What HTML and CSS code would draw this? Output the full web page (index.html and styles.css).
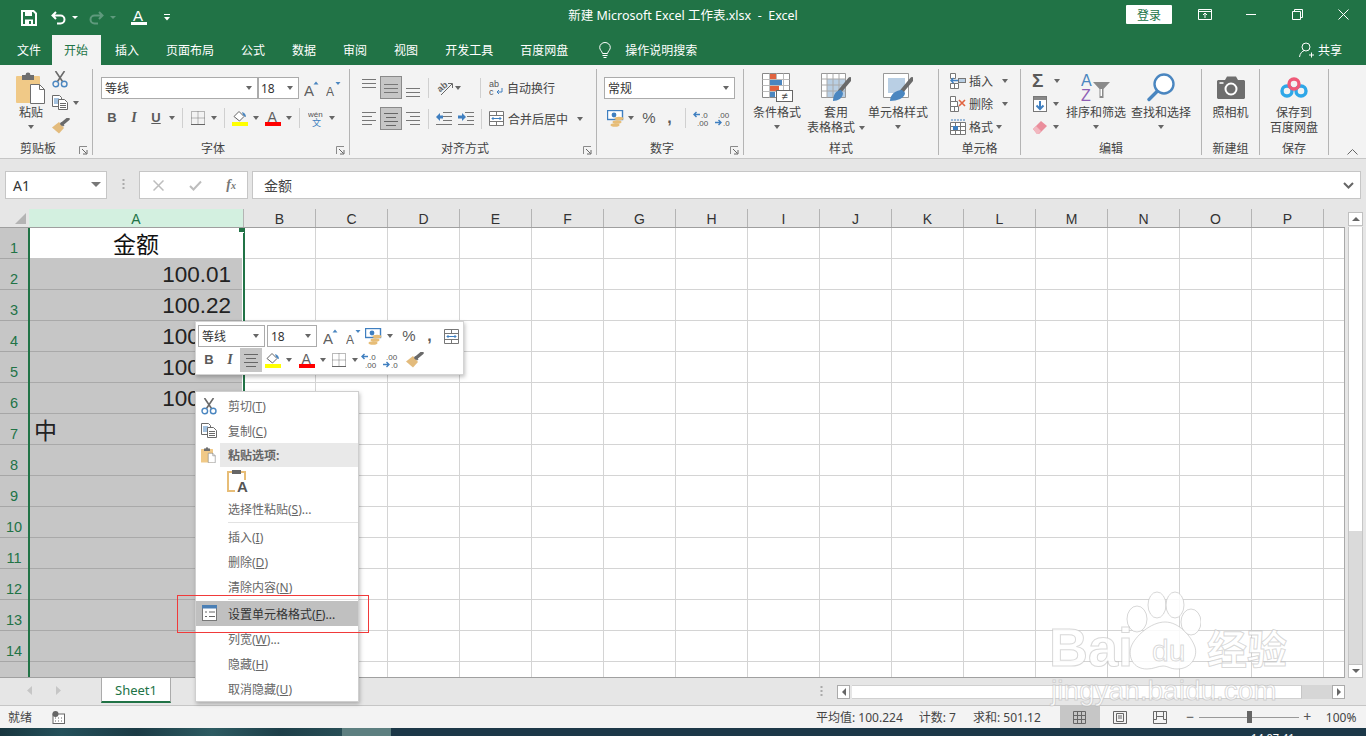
FILE: index.html
```html
<!DOCTYPE html>
<html lang="zh-CN">
<head>
<meta charset="utf-8">
<title>新建 Microsoft Excel 工作表.xlsx - Excel</title>
<link rel="stylesheet" href="styles.css">
</head>
<body>
<svg class="defs" width="0" height="0">
  <defs>
    <symbol id="i-paste" viewBox="0 0 30 32"><rect x="0" y="4" width="24" height="27" rx="1" fill="#f0c987"/><rect x="6" y="3" width="12" height="5" fill="#6e6e6e"/><circle cx="12" cy="3" r="2.4" fill="#6e6e6e"/><path d="M14.5 12.5h9l5 5v14h-14z" fill="#fff" stroke="#6e6e6e"/><path d="M23.5 12.5v5h5" fill="none" stroke="#6e6e6e"/></symbol>
    <symbol id="i-cut" viewBox="0 0 16 17"><path d="M3.5 0l7 10.5M12.500 0l-7 10.500" stroke="#6a6a6a" stroke-width="1.600" fill="none"/><circle cx="3.800" cy="13" r="2.800" fill="none" stroke="#4a86c0" stroke-width="1.400"/><circle cx="12.200" cy="13" r="2.800" fill="none" stroke="#4a86c0" stroke-width="1.400"/></symbol>
    <symbol id="i-copy" viewBox="0 0 16 15"><path d="M.5.500h7l2 2v9h-9z" fill="#fff" stroke="#6a6a6a"/><path d="M2 4h5M2 6h5M2 8h5" stroke="#4a86c0"/><path d="M6.500 4.500h6l3 3v7h-9z" fill="#fff" stroke="#6a6a6a"/><path d="M8 8.500h6M8 10.500h6M8 12.500h6" stroke="#6a6a6a"/></symbol>
    <symbol id="i-brush" viewBox="0 0 18 16"><path d="M0 9.500l7-5.500 5 6-5 5.500z" fill="#e3bb7c"/><path d="M8 5l3 3.500 1.500-1-2.500-3.500z" fill="#777"/><path d="M10 6l6-5" stroke="#6a6a6a" stroke-width="3.400" stroke-linecap="round"/></symbol>
    <symbol id="i-aup" viewBox="0 0 15 15"><text x="0" y="14.500" font-family="Liberation Sans" font-size="15" fill="#5f5f5f">A</text><path d="M9.500 3.500l2.500-3 2.500 3z" fill="#4a86c0"/></symbol>
    <symbol id="i-adown" viewBox="0 0 15 15"><text x="0" y="14.500" font-family="Liberation Sans" font-size="12" fill="#5f5f5f">A</text><path d="M9.500 1h5l-2.500 3z" fill="#4a86c0"/></symbol>
    <symbol id="i-border" viewBox="0 0 14 14"><path d="M.5.500h13v13h-13zM7 .5v13M.5 7h13" fill="none" stroke="#777" stroke-dasharray="1 1"/><path d="M0 13.500h14" stroke="#666"/></symbol>
    <symbol id="i-fill" viewBox="0 0 16 16"><path d="M2 6.500l5-5 5 5-4.500 4.500z" fill="#fff" stroke="#666"/><path d="M10 2c2.500.5 4 2.500 4 5-1 0-1.500-1-3-2z" fill="#4a86c0"/><rect y="12" width="16" height="4" fill="#ffff00"/></symbol>
    <symbol id="i-color" viewBox="0 0 16 16"><text x="2.500" y="11.500" font-family="Liberation Sans" font-size="14" fill="#5f5f5f">A</text><rect y="12" width="16" height="4" fill="#ff0000"/></symbol>
    <symbol id="i-wen" viewBox="0 0 17 17"><text x="0" y="7" font-family="Liberation Sans" font-size="8" fill="#555">wén</text><text x="4" y="16" font-family="Noto Sans CJK SC" font-size="9" fill="#3f7fc0">文</text></symbol>
    <symbol id="i-atop" viewBox="0 0 14 23"><path d="M0 2.500h14M0 6.500h14M0 10.500h14" stroke="#777" transform="translate(0 1)"/></symbol>
    <symbol id="i-amid" viewBox="0 0 14 23"><path d="M0 7.500h14M0 11.500h14M0 15.500h14" stroke="#777"/></symbol>
    <symbol id="i-abot" viewBox="0 0 14 23"><path d="M0 12.500h14M0 16.500h14M0 20.500h14" stroke="#777"/></symbol>
    <symbol id="i-aleft" viewBox="0 0 14 23"><path d="M0 5.500h14M0 9.500h10M0 13.500h14M0 17.500h10" stroke="#777"/></symbol>
    <symbol id="i-acen" viewBox="0 0 14 23"><path d="M0 5.500h14M2 9.500h10M0 13.500h14M2 17.500h10" stroke="#666"/></symbol>
    <symbol id="i-aright" viewBox="0 0 14 23"><path d="M0 5.500h14M4 9.500h10M0 13.500h14M4 17.500h10" stroke="#777"/></symbol>
    <symbol id="i-orient" viewBox="0 0 17 17"><text x="1" y="11" font-family="Liberation Sans" font-size="9" font-weight="bold" fill="#666" transform="rotate(-40 6 8)">ab</text><path d="M5 16L16 5M12 4.500h4.500V9" fill="none" stroke="#666"/></symbol>
    <symbol id="i-indl" viewBox="0 0 16 15"><path d="M7 1.500h9M7 5.500h9M7 9.500h9M0 13.500h16" stroke="#777"/><path d="M0 6l4-4v2.500h3v3H4V10z" fill="#3f7fc0"/></symbol>
    <symbol id="i-indr" viewBox="0 0 16 15"><path d="M7 1.500h9M9 5.500h7M9 9.500h7M0 13.500h16" stroke="#777"/><path d="M8 6L4 2v2.500H0v3h4V10z" fill="#3f7fc0"/></symbol>
    <symbol id="i-wrap" viewBox="0 0 14 17"><text x="0" y="7.500" font-family="Liberation Sans" font-size="9" fill="#555">ab</text><text x="0" y="16" font-family="Liberation Sans" font-size="9" fill="#555">c</text><path d="M13 9v4H8M10 11l-2 2 2 2" fill="none" stroke="#3f7fc0"/></symbol>
    <symbol id="i-merge" viewBox="0 0 15 15"><path d="M.5.500h14v14H.5zM.5 4.500h14M.5 10.500h14M7.500.5v4M7.500 10.500v4" fill="#fff" stroke="#777"/><rect x="1" y="5" width="13" height="5" fill="#fff"/><path d="M3 7.500h9M4.500 6L3 7.500 4.500 9M10.500 6L12 7.500 10.500 9" fill="none" stroke="#3f7fc0"/></symbol>
    <symbol id="i-money" viewBox="0 0 17 17"><rect x=".5" y=".5" width="15" height="9" fill="#fff" stroke="#3f7fc0" stroke-width="1.400"/><circle cx="7" cy="5" r="2.400" fill="#3f7fc0"/><ellipse cx="12" cy="8.500" rx="4.500" ry="1.800" fill="#e7bd77"/><ellipse cx="10" cy="12" rx="4.500" ry="1.800" fill="#e7bd77"/><ellipse cx="8" cy="15" rx="4.500" ry="1.800" fill="#e7bd77"/></symbol>
    <symbol id="i-incd" viewBox="0 0 16 15"><path d="M7 3.500H1M3.500 1L1 3.500 3.500 6" fill="none" stroke="#3f7fc0" stroke-width="1.400"/><text x="8" y="6.500" font-family="Liberation Sans" font-size="8" fill="#555">.0</text><text x="4" y="14.500" font-family="Liberation Sans" font-size="8" fill="#555">.00</text></symbol>
    <symbol id="i-decd" viewBox="0 0 16 15"><text x="3" y="6.500" font-family="Liberation Sans" font-size="8" fill="#555">.00</text><path d="M0 11.500h6M3.500 9L6 11.500 3.500 14" fill="none" stroke="#3f7fc0" stroke-width="1.400"/><text x="8" y="14.500" font-family="Liberation Sans" font-size="8" fill="#555">.0</text></symbol>
    <symbol id="i-cond" viewBox="0 0 31 29"><path d="M.5.500h27v24H.5z" fill="#fff" stroke="#888"/><path d="M7.500.5v24M14.500.5v24M21.500.5v24M.5 6.500h27M.5 12.500h27M.5 18.500h27" stroke="#bbb"/><rect x="8" y="1" width="6" height="5" fill="#e1633f"/><rect x="8" y="7" width="12" height="5" fill="#4a86c0"/><rect x="8" y="13" width="9" height="5" fill="#e1633f"/><rect x="8" y="19" width="5" height="5" fill="#4a86c0"/><rect x="14.500" y="17.500" width="16" height="11" fill="#fff" stroke="#666"/><text x="22.500" y="27" text-anchor="middle" font-family="Liberation Sans" font-size="11" fill="#444">≠</text></symbol>
    <symbol id="i-tablef" viewBox="0 0 30 29"><path d="M.5.500h24v24H.5z" fill="#fff" stroke="#999"/><rect x="6" y="6" width="18" height="18" fill="#b9cfe4"/><path d="M6 .5v24M12 .5v24M18 .5v24M.5 6h24M.5 12h24M.5 18h24" stroke="#aaa"/><path d="M29 6L19 18" stroke="#6a6a6a" stroke-width="4" stroke-linecap="round"/><path d="M12 28c0-6 3-11 8-11l2 3c0 5-5 8-10 8z" fill="#4a86c0"/></symbol>
    <symbol id="i-cellst" viewBox="0 0 30 29"><path d="M.5.500h25v24H.5z" fill="#fff" stroke="#999"/><rect x="5" y="5" width="17" height="15" fill="#b9cfe4"/><path d="M29 6L19 18" stroke="#6a6a6a" stroke-width="4" stroke-linecap="round"/><path d="M7 28c0-6 5-11 12-11l3 3c0 5-8 8-15 8z" fill="#4a86c0"/></symbol>
    <symbol id="i-cins" viewBox="0 0 16 16"><path d="M.5.500h5v5h-5zM.5 10.500h8v5h-8zM4.500 10.500v5" fill="#fff" stroke="#777"/><rect x="8.500" y="5.500" width="7" height="4" fill="#b9cfe4" stroke="#777"/><path d="M8 7.500H1M3.500 5L1 7.500 3.500 10" fill="none" stroke="#3f7fc0" stroke-width="1.400"/></symbol>
    <symbol id="i-cdel" viewBox="0 0 16 16"><path d="M.5.500h5v5h-5zM.5 10.500h8v5h-8zM4.500 10.500v5M.5 5.500h7v5h-7z" fill="#fff" stroke="#777"/><path d="M9 4l6 6M15 4l-6 6" stroke="#e1633f" stroke-width="1.600"/></symbol>
    <symbol id="i-cfmt" viewBox="0 0 16 16"><path d="M.5 3.500h15v12H.5zM.5 7.500h15M.5 11.500h15M5.500 3.500v12M10.500 3.500v12" fill="#fff" stroke="#777"/><rect x="3" y="7" width="5" height="4" fill="#3f7fc0"/><path d="M1 1h14" stroke="#3f7fc0" stroke-dasharray="2 1"/></symbol>
    <symbol id="i-fd" viewBox="0 0 14 16"><rect x=".5" y=".5" width="13" height="15" fill="#fff" stroke="#777"/><rect x="1" y="1" width="12" height="3" fill="#888"/><path d="M7 5v8M3.500 9.500L7 13l3.500-3.500" fill="none" stroke="#3f7fc0" stroke-width="2"/></symbol>
    <symbol id="i-erase" viewBox="0 0 14 14"><path d="M0 9l8-8 6 5-8 8H4z" fill="#ea8e9c"/><path d="M0 9l3-3 5 5-2.500 3H4z" fill="#f2b8c0"/></symbol>
    <symbol id="i-sort" viewBox="0 0 31 29"><text x="0" y="13" font-family="Liberation Sans" font-size="16" fill="#4a86c0">A</text><text x="0" y="28" font-family="Liberation Sans" font-size="16" fill="#8f5fb5">Z</text><path d="M12 9h17l-6.500 7v9h-4v-9z" fill="#8a8a8a"/><path d="M19.500 16h1.500v7h-1.500z" fill="#fff"/></symbol>
    <symbol id="i-find" viewBox="0 0 28 29"><circle cx="17" cy="11" r="9.500" fill="#fff" stroke="#4a86c0" stroke-width="2.400"/><path d="M10 18.500L2 26.500" stroke="#4a86c0" stroke-width="3.400" stroke-linecap="round"/></symbol>
    <symbol id="i-cam" viewBox="0 0 28 23"><path d="M1 4h7l2-3.500h9L21 4h6l1 1v17l-1 1H1l-1-1V5z" fill="#6e6e6e"/><circle cx="14" cy="13" r="5.500" fill="#6e6e6e" stroke="#fff" stroke-width="2"/><rect x="2.500" y="6" width="4" height="2" fill="#ddd"/></symbol>
    <symbol id="i-bcloud" viewBox="0 0 28 21"><circle cx="7" cy="14" r="5" fill="none" stroke="#2ea7e8" stroke-width="3.400"/><circle cx="21" cy="14" r="5" fill="none" stroke="#2ea7e8" stroke-width="3.400"/><circle cx="14" cy="7" r="5" fill="none" stroke="#ef5a78" stroke-width="3.400"/></symbol>
    <symbol id="i-launch" viewBox="0 0 9 9"><path d="M.5 8V.5H8" fill="none" stroke="#8a8a8a"/><path d="M3 3l4.500 4.500M8 4v4H4" fill="none" stroke="#666"/></symbol>
    <symbol id="i-cfmtmenu" viewBox="0 0 15 16"><rect x=".5" y=".5" width="14" height="15" fill="#fff" stroke="#777"/><rect width="15" height="3.500" fill="#4a7fb5"/><path d="M3 7h2M7 7h6M3 11.500h2M7 11.500h6" stroke="#666"/></symbol>
  </defs>
</svg>

<div class="app">
  <header class="titlebar">
    <div class="qat">
      <svg class="q-save" width="16" height="16" viewBox="0 0 16 16"><path d="M1 1h11.500L15 3.500V15H1z" fill="none" stroke="#fff" stroke-width="2"/><rect x="4" y="1" width="7" height="5" fill="#fff"/><rect x="4" y="9.500" width="8" height="5.500" fill="#fff"/><rect x="8" y="11" width="2" height="3" fill="#217346"/></svg>
      <svg class="q-undo" width="15" height="14" viewBox="0 0 15 14"><path d="M5 1L1.500 4.500 5 8M2 4.500h7.500a4 4 0 0 1 0 8H6" fill="none" stroke="#fff" stroke-width="2"/></svg>
      <span class="caret white m6"></span>
      <svg class="q-redo" width="15" height="14" viewBox="0 0 15 14"><path d="M10 1l3.500 3.500L10 8M13 4.500H5.500a4 4 0 0 0 0 8H9" fill="none" stroke="#5f9a7d" stroke-width="2"/></svg>
      <span class="caret dim m6"></span>
      <svg class="q-font" width="16" height="17" viewBox="0 0 16 17"><text x="2" y="12" font-family="Liberation Sans" font-size="15" fill="#fff">A</text><rect y="13" width="16" height="3" fill="#fff"/></svg>
      <svg class="q-more" width="6" height="7" viewBox="0 0 6 7"><path d="M0 .5h6" stroke="#fff"/><path d="M0 3h6L3 6.500z" fill="#fff"/></svg>
    </div>
    <div class="doc-title">新建 Microsoft Excel 工作表.xlsx&nbsp; -&nbsp; Excel</div>
    <div class="win">
      <button class="login">登录</button>
      <span class="win-btn"><svg width="14" height="11" viewBox="0 0 14 11"><path d="M.5.500h13v10H.5zM.5 2.500h13" fill="none" stroke="#fff"/><path d="M7 9V4.500M5 6l2-2 2 2" fill="none" stroke="#fff"/></svg></span>
      <span class="win-btn"><svg width="10" height="2" viewBox="0 0 10 2"><path d="M0 .5h10" stroke="#fff"/></svg></span>
      <span class="win-btn"><svg width="11" height="11" viewBox="0 0 11 11"><path d="M.5 2.500h8v8h-8zM2.500 2.500v-2h8v8h-2" fill="none" stroke="#fff"/></svg></span>
      <span class="win-btn"><svg width="11" height="11" viewBox="0 0 11 11"><path d="M.5.500l10 10M10.500.5l-10 10" stroke="#fff"/></svg></span>
    </div>
  </header>

  <nav class="tabs">
    <span class="tab file">文件</span>
    <span class="tab active">开始</span>
    <span class="tab">插入</span>
    <span class="tab">页面布局</span>
    <span class="tab">公式</span>
    <span class="tab">数据</span>
    <span class="tab">审阅</span>
    <span class="tab">视图</span>
    <span class="tab">开发工具</span>
    <span class="tab">百度网盘</span>
    <svg class="bulb" width="12" height="17" viewBox="0 0 12 17"><path d="M3.500 11.500C3 9 .7 8 .7 5.500a5.300 5 0 0 1 10.600 0c0 2.500-2.300 3.500-2.800 6z" fill="none" stroke="#fff"/><path d="M3.500 13.500h5M4.500 15.500h3" stroke="#fff"/></svg>
    <span class="tell">操作说明搜索</span>
    <span class="share"><svg width="15" height="16" viewBox="0 0 15 16"><circle cx="7" cy="5" r="4" fill="none" stroke="#fff"/><path d="M.5 15c.5-4 3-6 5-6.500M10 13h5M12.500 10.500v5" fill="none" stroke="#fff"/></svg>共享</span>
  </nav>

  <section class="ribbon">
    <div class="group g-clip">
      <div class="body row-body">
        <div class="big paste">
          <div class="big-icon"><svg width="30" height="32"><use href="#i-paste"/></svg></div>
          <div class="big-label">粘贴</div>
          <span class="caret big-caret"></span>
        </div>
        <div class="clip-small">
          <svg width="16" height="17"><use href="#i-cut"/></svg>
          <div class="copy-line"><svg width="16" height="15"><use href="#i-copy"/></svg><span class="caret m5"></span></div>
          <svg class="brush" width="18" height="16"><use href="#i-brush"/></svg>
        </div>
      </div>
      <div class="glabel"><span>剪贴板</span><svg class="launch" width="9" height="9"><use href="#i-launch"/></svg></div>
    </div>

    <div class="group g-font">
      <div class="body">
        <div class="r1 rowf pad8">
          <div class="combo w157">等线<span class="caret push"></span></div>
          <div class="combo w41 overlap">18<span class="caret push"></span></div>
          <svg class="m5" width="15" height="15"><use href="#i-aup"/></svg>
          <svg class="m7" width="15" height="15"><use href="#i-adown"/></svg>
        </div>
        <div class="r2 rowf pad8">
          <span class="tb b m6">B</span>
          <span class="tb i m13">I</span>
          <span class="tb u m13">U</span>
          <span class="caret m8"></span>
          <span class="vsep m7"></span>
          <svg class="m8" width="14" height="14"><use href="#i-border"/></svg>
          <span class="caret m6"></span>
          <span class="vsep m7"></span>
          <svg class="m7" width="16" height="16"><use href="#i-fill"/></svg>
          <span class="caret m5"></span>
          <svg class="m6" width="16" height="16"><use href="#i-color"/></svg>
          <span class="caret m5"></span>
          <span class="vsep m7"></span>
          <svg class="m8" width="17" height="17"><use href="#i-wen"/></svg>
          <span class="caret m4"></span>
        </div>
      </div>
      <div class="glabel"><span>字体</span><svg class="launch" width="9" height="9"><use href="#i-launch"/></svg></div>
    </div>

    <div class="group g-align">
      <div class="body">
        <div class="ra1 rowf">
          <svg class="m12" width="14" height="23"><use href="#i-atop"/></svg>
          <span class="pressed m4"><svg width="14" height="23"><use href="#i-amid"/></svg></span>
          <svg class="m4" width="14" height="23"><use href="#i-abot"/></svg>
          <span class="vsep m8"></span>
          <svg class="m7" width="17" height="17"><use href="#i-orient"/></svg>
          <span class="caret m2"></span>
          <span class="vsep m19"></span>
          <svg class="m8" width="14" height="17"><use href="#i-wrap"/></svg>
          <span class="m4">自动换行</span>
        </div>
        <div class="ra2 rowf">
          <svg class="m12" width="14" height="23"><use href="#i-aleft"/></svg>
          <span class="pressed m4"><svg width="14" height="23"><use href="#i-acen"/></svg></span>
          <svg class="m4" width="14" height="23"><use href="#i-aright"/></svg>
          <span class="vsep m8"></span>
          <svg class="m7" width="16" height="15"><use href="#i-indl"/></svg>
          <svg class="m6" width="16" height="15"><use href="#i-indr"/></svg>
          <span class="vsep m7"></span>
          <svg class="m7" width="15" height="15"><use href="#i-merge"/></svg>
          <span class="m4">合并后居中</span>
          <span class="caret m9"></span>
        </div>
      </div>
      <div class="glabel"><span>对齐方式</span><svg class="launch" width="9" height="9"><use href="#i-launch"/></svg></div>
    </div>

    <div class="group g-num">
      <div class="body">
        <div class="r1 rowf pad7">
          <div class="combo w131">常规<span class="caret push"></span></div>
        </div>
        <div class="r2 rowf">
          <svg class="m10" width="17" height="17"><use href="#i-money"/></svg>
          <span class="caret m4"></span>
          <span class="tb pct m8">%</span>
          <span class="tb comma m11">,</span>
          <span class="vsep m13"></span>
          <svg class="m7" width="16" height="15"><use href="#i-incd"/></svg>
          <svg class="m6" width="16" height="15"><use href="#i-decd"/></svg>
        </div>
      </div>
      <div class="glabel"><span>数字</span><svg class="launch" width="9" height="9"><use href="#i-launch"/></svg></div>
    </div>

    <div class="group g-style">
      <div class="body row-body">
        <div class="big w56 m5">
          <div class="big-icon"><svg width="31" height="29"><use href="#i-cond"/></svg></div>
          <div class="big-label">条件格式</div>
          <span class="caret big-caret"></span>
        </div>
        <div class="big w60 m1">
          <div class="big-icon"><svg width="30" height="29"><use href="#i-tablef"/></svg></div>
          <div class="big-label">套用</div>
          <div class="big-label">表格格式<span class="caret m4 inl"></span></div>
        </div>
        <div class="big w60 m2">
          <div class="big-icon"><svg width="30" height="29"><use href="#i-cellst"/></svg></div>
          <div class="big-label">单元格样式</div>
          <span class="caret big-caret"></span>
        </div>
      </div>
      <div class="glabel center"><span>样式</span></div>
    </div>

    <div class="group g-cells">
      <div class="body">
        <div class="cellrow"><svg class="m11" width="16" height="16"><use href="#i-cins"/></svg><span class="m3">插入</span><span class="caret m9"></span></div>
        <div class="cellrow"><svg class="m11" width="16" height="16"><use href="#i-cdel"/></svg><span class="m3">删除</span><span class="caret m9"></span></div>
        <div class="cellrow"><svg class="m11" width="16" height="16"><use href="#i-cfmt"/></svg><span class="m3">格式</span><span class="caret m3"></span></div>
      </div>
      <div class="glabel center"><span>单元格</span></div>
    </div>

    <div class="group g-edit">
      <div class="body row-body">
        <div class="edit-col m11">
          <div class="cellrow"><span class="sigma">Σ</span><span class="caret m6"></span></div>
          <div class="cellrow"><svg class="m1" width="14" height="16"><use href="#i-fd"/></svg><span class="caret m6"></span></div>
          <div class="cellrow"><svg class="m1" width="14" height="14"><use href="#i-erase"/></svg><span class="caret m6"></span></div>
        </div>
        <div class="big w60 m6">
          <div class="big-icon"><svg width="31" height="29"><use href="#i-sort"/></svg></div>
          <div class="big-label">排序和筛选</div>
          <span class="caret big-caret"></span>
        </div>
        <div class="big w60 m5">
          <div class="big-icon"><svg width="28" height="29"><use href="#i-find"/></svg></div>
          <div class="big-label">查找和选择</div>
          <span class="caret big-caret"></span>
        </div>
      </div>
      <div class="glabel center"><span>编辑</span></div>
    </div>

    <div class="group g-new">
      <div class="body row-body">
        <div class="big full">
          <div class="big-icon"><svg width="28" height="23"><use href="#i-cam"/></svg></div>
          <div class="big-label">照相机</div>
        </div>
      </div>
      <div class="glabel center"><span>新建组</span></div>
    </div>

    <div class="group g-save">
      <div class="body row-body">
        <div class="big full">
          <div class="big-icon"><svg width="28" height="21"><use href="#i-bcloud"/></svg></div>
          <div class="big-label">保存到</div>
          <div class="big-label">百度网盘</div>
        </div>
      </div>
      <div class="glabel center"><span>保存</span></div>
    </div>

    <div class="collapse"><svg width="11" height="6" viewBox="0 0 11 6"><path d="M.5 5.500l5-5 5 5" fill="none" stroke="#666"/></svg></div>
  </section>

  <section class="formula">
    <div class="fbox name">A1<span class="caret big push"></span></div>
    <svg class="grip" width="3" height="11" viewBox="0 0 3 11"><path d="M1.500 0v2M1.500 4v2M1.500 8v2" stroke="#aaa" stroke-width="2"/></svg>
    <div class="fbox btns">
      <svg width="11" height="11" viewBox="0 0 11 11"><path d="M.5.500l10 10M10.500.5l-10 10" stroke="#bdbdbd" stroke-width="1.500"/></svg>
      <svg width="13" height="11" viewBox="0 0 13 11"><path d="M1 6l3.500 3.500L12 1.500" fill="none" stroke="#bdbdbd" stroke-width="2"/></svg>
      <span class="fx">f<small>x</small></span>
    </div>
    <div class="fbox input">金额<svg class="push" width="11" height="7" viewBox="0 0 11 7"><path d="M1 1l4.500 4.500L10 1" fill="none" stroke="#666" stroke-width="2"/></svg></div>
  </section>

  <section class="sheet">
    <div class="grid">
      <div class="colheads">
        <div class="corner"><span class="tri"></span></div>
        <div class="ch cur">A</div>
        <div class="ch">B</div><div class="ch">C</div><div class="ch">D</div><div class="ch">E</div><div class="ch">F</div><div class="ch">G</div><div class="ch">H</div><div class="ch">I</div><div class="ch">J</div><div class="ch">K</div><div class="ch">L</div><div class="ch">M</div><div class="ch">N</div><div class="ch">O</div><div class="ch">P</div><div class="ch last"></div>
      </div>
      <div class="gridbody">
        <div class="rowheads">
          <div class="rh">1</div><div class="rh">2</div><div class="rh">3</div><div class="rh">4</div><div class="rh">5</div><div class="rh">6</div><div class="rh">7</div><div class="rh">8</div><div class="rh">9</div><div class="rh">10</div><div class="rh">11</div><div class="rh">12</div><div class="rh">13</div><div class="rh">14</div><div class="rh">15</div>
        </div>
        <div class="col-a">
          <div class="cell head">金额</div>
          <div class="cell num">100.01</div>
          <div class="cell num">100.22</div>
          <div class="cell num">100.33</div>
          <div class="cell num">100.44</div>
          <div class="cell num">100.12</div>
          <div class="cell txt">中</div>
          <div class="cell"></div><div class="cell"></div><div class="cell"></div><div class="cell"></div><div class="cell"></div><div class="cell"></div><div class="cell"></div><div class="cell"></div>
          <span class="handle"></span>
        </div>
        <div class="rest"></div>
      </div>
    </div>
    <div class="vscroll">
      <div class="sbtn"><span class="up"></span></div>
      <div class="vthumb"></div>
      <div class="sbtn down"><span class="dn"></span></div>
    </div>
  </section>

  <section class="tabbar">
    <svg class="nav-l" width="6" height="9" viewBox="0 0 6 9"><path d="M5 0v9L0 4.500z" fill="#c6c6c6"/></svg>
    <svg class="nav-r" width="6" height="9" viewBox="0 0 6 9"><path d="M1 0v9l5-4.500z" fill="#c6c6c6"/></svg>
    <div class="sheet-tab">Sheet1</div>
    <svg class="grip2" width="3" height="11" viewBox="0 0 3 11"><path d="M1.500 0v2M1.500 4v2M1.500 8v2" stroke="#aaa" stroke-width="2"/></svg>
    <div class="hscroll">
      <div class="hbtn"><span class="lf"></span></div>
      <div class="hthumb"></div>
      <div class="htrack"></div>
      <div class="hbtn"><span class="rt"></span></div>
    </div>
  </section>

  <footer class="status">
    <span class="ready">就绪</span>
    <svg class="macro" width="13" height="13" viewBox="0 0 13 13"><rect x="1" y="3" width="11.500" height="9.500" fill="#fff" stroke="#666"/><circle cx="3.500" cy="3" r="3" fill="#666"/><path d="M3 7h1M6 7h1M9 7h1M3 10h1M6 10h1M9 10h1" stroke="#666"/></svg>
    <span class="stat s1">平均值: 100.224</span>
    <span class="stat s2">计数: 7</span>
    <span class="stat s3">求和: 501.12</span>
    <span class="view on"><svg width="13" height="13" viewBox="0 0 13 13"><path d="M.5.500h12v12H.5zM4.500.5v12M8.500.5v12M.5 4.500h12M.5 8.500h12" fill="none" stroke="#666"/></svg></span>
    <span class="view v2"><svg width="14" height="13" viewBox="0 0 14 13"><path d="M.5.500h13v12H.5zM3.500 2.500h7v8h-7zM5 5h4M5 7h4" fill="none" stroke="#666"/></svg></span>
    <span class="view v3"><svg width="14" height="13" viewBox="0 0 14 13"><path d="M.5.500h13v12H.5zM.5 8.500h3v-8M10.500.5v8h3M3.500 5.500h7" fill="none" stroke="#666"/></svg></span>
    <span class="zoomsym z1">−</span>
    <span class="slider"><span class="knob"></span></span>
    <span class="zoomsym z2">+</span>
    <span class="pct100">100%</span>
  </footer>

  <div class="desktop">
    <span class="d-left"></span><span class="d-mid"></span><span class="d-right"><span class="clock">14:07:41</span></span>
  </div>

  <div class="mini">
    <div class="mini-row m-top">
      <div class="combo mw67">等线<span class="caret push"></span></div>
      <div class="combo mw49">18<span class="caret push"></span></div>
      <svg class="m6" width="15" height="15"><use href="#i-aup"/></svg>
      <svg class="m8" width="15" height="15"><use href="#i-adown"/></svg>
      <svg class="m4" width="17" height="17"><use href="#i-money"/></svg>
      <span class="caret m5"></span>
      <span class="tb pct m9">%</span>
      <span class="tb comma m11">,</span>
      <svg class="m12" width="15" height="15"><use href="#i-merge"/></svg>
    </div>
    <div class="mini-row m-bot">
      <span class="tb b m6">B</span>
      <span class="tb i m12">I</span>
      <span class="pressed2 m6"><svg width="14" height="23"><use href="#i-acen"/></svg></span>
      <svg class="m3" width="16" height="16"><use href="#i-fill"/></svg>
      <span class="caret m5"></span>
      <svg class="m7" width="16" height="16"><use href="#i-color"/></svg>
      <span class="caret m5"></span>
      <svg class="m6" width="14" height="14"><use href="#i-border"/></svg>
      <span class="caret m6"></span>
      <svg class="m3" width="16" height="15"><use href="#i-incd"/></svg>
      <svg class="m6" width="16" height="15"><use href="#i-decd"/></svg>
      <svg class="m7" width="18" height="16"><use href="#i-brush"/></svg>
    </div>
  </div>

  <div class="menu">
    <div class="mi"><svg class="mico" width="16" height="17"><use href="#i-cut"/></svg><span>剪切(<u>T</u>)</span></div>
    <div class="mi"><svg class="mico" width="16" height="15"><use href="#i-copy"/></svg><span>复制(<u>C</u>)</span></div>
    <div class="mi mhead"><svg class="mico head-ico" width="15" height="16"><use href="#i-paste"/></svg><b>粘贴选项:</b></div>
    <div class="mpaste"><svg width="24" height="24" viewBox="0 0 24 24"><path d="M11 2H1v19h7" fill="none" stroke="#e7bd77" stroke-width="2"/><path d="M14 2h4v8" fill="none" stroke="#e7bd77" stroke-width="2"/><rect x="5" y="0" width="9" height="4" fill="#666"/><text x="10" y="22" font-family="Liberation Sans" font-weight="bold" font-size="15" fill="#555">A</text></svg></div>
    <div class="mi short"><span>选择性粘贴(<u>S</u>)...</span></div>
    <div class="msep"></div>
    <div class="mi"><span>插入(<u>I</u>)</span></div>
    <div class="mi"><span>删除(<u>D</u>)</span></div>
    <div class="mi"><span>清除内容(<u>N</u>)</span></div>
    <div class="msep tight"></div>
    <div class="mi sel"><svg class="mico" width="15" height="16"><use href="#i-cfmtmenu"/></svg><span>设置单元格格式(<u>F</u>)...</span></div>
    <div class="mi"><span>列宽(<u>W</u>)...</span></div>
    <div class="mi"><span>隐藏(<u>H</u>)</span></div>
    <div class="mi"><span>取消隐藏(<u>U</u>)</span></div>
  </div>

  <div class="redbox"></div>

  <div class="watermark">
    <svg class="paw" width="90" height="84" viewBox="0 0 90 84"><g fill="#fff" fill-opacity=".85" stroke="#bdbdbd" stroke-opacity=".6"><ellipse cx="26" cy="29" rx="10" ry="13"/><ellipse cx="46" cy="15" rx="9" ry="13"/><ellipse cx="64" cy="15" rx="9" ry="13"/><ellipse cx="80" cy="32" rx="10" ry="13"/><path d="M54 32c14 0 26 14 30 25 3 10-4 22-18 22-7 0-9-3-14-3s-9 3-16 3c-14 0-19-12-16-22 4-11 20-25 34-25z"/></g></svg>
    <span class="wm-bai">Bai</span>
    <span class="wm-du">du</span>
    <span class="wm-cn">经验</span>
    <span class="wm-url">jingyan.baidu.com</span>
  </div>
</div>
</body>
</html>
```
FILE: styles.css
```css
* { box-sizing: border-box; }
html, body { margin: 0; padding: 0; }
body {
  width: 1366px;
  height: 736px;
  overflow: hidden;
  font-family: "Noto Sans", "Noto Sans CJK SC", sans-serif;
  font-size: 12px;
  color: #444;
  background: #1c3a44;
}
.defs { position: absolute; }
svg { display: block; flex: none; }
.app { position: relative; width: 1366px; height: 736px; display: flex; flex-direction: column; }

.m1{margin-left:1px}.m2{margin-left:2px}.m3{margin-left:3px}.m4{margin-left:4px}.m5{margin-left:5px}
.m6{margin-left:6px}.m7{margin-left:7px}.m8{margin-left:8px}.m9{margin-left:9px}.m10{margin-left:10px}
.m11{margin-left:11px}.m12{margin-left:12px}.m13{margin-left:13px}.m19{margin-left:19px}

.caret {
  display: block; flex: none; width: 0; height: 0;
  border-left: 3.5px solid transparent;
  border-right: 3.5px solid transparent;
  border-top: 4px solid #666;
}
.caret.white { border-top-color: #fff; border-left-width: 3px; border-right-width: 3px; border-top-width: 3px; }
.caret.dim { border-top-color: #5f9a7d; border-left-width: 3px; border-right-width: 3px; border-top-width: 3px; }
.caret.big { border-left-width: 5px; border-right-width: 5px; border-top-width: 5px; border-top-color: #777; }
.caret.inl { display: inline-block; vertical-align: middle; }
.push { margin-left: auto; }

/* title bar */
.titlebar {
  height: 35px; flex: none; background: #217346; color: #fff;
  display: grid; grid-template-columns: 1fr auto 1fr; align-items: center;
}
.qat { display: flex; align-items: center; padding-left: 21px; }
.q-undo { margin-left: 14px; }
.q-redo { margin-left: 11px; }
.q-font { margin-left: 15px; }
.q-more { margin-left: 17px; }
.doc-title { font-size: 12.500px; padding-bottom: 6px; color: #fff; }
.win { display: flex; align-items: center; justify-content: flex-end; height: 35px; padding-bottom: 6px; }
.login {
  width: 46px; height: 19px; padding: 0; border: 0; border-radius: 1px;
  background: #fff; color: #217346; font: 12px "Noto Sans CJK SC", sans-serif; margin-right: 10px;
}
.win-btn { width: 46px; display: flex; justify-content: center; align-items: center; }

/* tabs */
.tabs { height: 30px; flex: none; background: #217346; color: #fff; display: flex; align-items: stretch; gap: 2px; }
.tab { display: flex; align-items: center; padding: 0 13px 0 12px; }
.tab.file { padding: 0 7px 0 17px; margin-right: 2px; }
.tab.active { background: #f3f3f3; color: #217346; }
.bulb { align-self: center; margin-left: 16px; }
.tell { align-self: center; margin-left: 12px; }
.share { margin-left: auto; display: flex; align-items: center; gap: 4px; padding-right: 24px; }

/* ribbon */
.ribbon {
  height: 94px; flex: none; background: #f3f3f3; border-bottom: 1px solid #c6c6c6;
  display: flex; align-items: flex-start; padding-top: 4px;
}
.group {
  height: 86px; flex: none; display: flex; flex-direction: column;
  border-right: 1px solid #b4b4b4; white-space: nowrap;
}
.g-clip { width: 93px; }
.g-font { width: 257px; }
.g-align { width: 247px; }
.g-num { width: 147px; }
.g-style { width: 195px; }
.g-cells { width: 82px; }
.g-edit { width: 181px; }
.g-new { width: 58px; }
.g-save { width: 69px; }
.body { flex: 1; min-height: 0; }
.row-body { display: flex; align-items: flex-start; }
.glabel { display: flex; align-items: center; height: 20px; margin-bottom: -3px; padding-right: 4px; }
.glabel span { flex: 1; text-align: center; }
.glabel.center { padding-right: 0; }
.launch { margin: 5px 0 0 3px; }
.collapse { flex: 1; align-self: flex-end; display: flex; justify-content: flex-end; padding: 0 8px 3px 0; }

.big { display: flex; flex-direction: column; align-items: center; flex: none; padding-top: 2px; }
.big-icon { height: 33px; display: flex; align-items: center; justify-content: center; }
.big-label { line-height: 15px; margin-top: 1px; height: 15px; display: flex; align-items: center; white-space: nowrap; }
.big-label + .big-label { margin-top: 0; }
.big-caret { margin-top: 5px; }
.paste { width: 30px; margin-left: 16px; }
.w56 { width: 56px; } .w60 { width: 60px; }
.full { width: 100%; }
.clip-small { margin-left: 6px; padding-top: 2px; display: flex; flex-direction: column; }
.copy-line { display: flex; align-items: center; margin-top: 7px; }
.brush { margin-top: 8px; }

.rowf { display: flex; align-items: center; }
.pad8 { padding-left: 8px; } .pad7 { padding-left: 7px; }
.r1 { height: 22px; margin-top: 8px; }
.r2 { height: 20px; margin-top: 9px; }
.ra1 { height: 23px; margin-top: 7px; }
.ra2 { height: 23px; margin-top: 8px; }
.combo {
  height: 22px; background: #fff; border: 1px solid #ababab; display: flex; align-items: center;
  padding: 0 5px 0 3px; color: #333; flex: none;
}
.w157 { width: 157px; } .w41 { width: 41px; padding-left: 2px; } .w131 { width: 131px; }
.overlap { margin-left: 0; }
.tb { display: block; flex: none; font-family: "Liberation Sans", sans-serif; color: #5a5a5a; font-size: 13px; text-align: center; line-height: 16px; }
.tb.b { width: 10px; font-weight: bold; }
.tb.i { width: 8px; font-style: italic; font-family: "Liberation Serif", serif; font-weight: bold; font-size: 14px; }
.tb.u { width: 10px; font-weight: bold; text-decoration: underline; }
.tb.pct { width: 14px; font-size: 15px; }
.tb.comma { width: 5px; font-size: 16px; font-weight: bold; line-height: 12px; }
.vsep { display: block; flex: none; width: 1px; height: 20px; background: #d0d0d0; }
.pressed { flex: none; display: flex; justify-content: center; width: 22px; height: 23px; background: #c6c6c6; border: 1px solid #8a8a8a; }
.cellrow { display: flex; align-items: center; height: 23px; }
.edit-col { width: 28px; flex: none; }
.sigma { width: 16px; font-family: "Liberation Sans", sans-serif; font-weight: bold; font-size: 19px; color: #5a5a5a; line-height: 20px; }

/* formula bar */
.formula { height: 50px; flex: none; background: #e6e6e6; display: flex; align-items: flex-start; padding: 12px 5px 0 5px; }
.fbox { height: 28px; background: #fff; border: 1px solid #c6c6c6; display: flex; align-items: center; flex: none; }
.name { width: 102px; padding: 0 5px 0 7px; font-size: 14px; color: #333; }
.grip { margin: 8px 0 0 15px; }
.btns { width: 109px; margin-left: 14px; padding: 0 11px 0 13px; justify-content: space-between; }
.fx { font-family: "Liberation Serif", serif; font-style: italic; font-weight: bold; color: #777; font-size: 14px; }
.fx small { font-size: 10px; }
.input { flex: 1; margin-left: 4px; padding: 0 6px 0 11px; font-size: 14px; color: #444; }

/* sheet */
.sheet { height: 469px; flex: none; background: #e6e6e6; display: flex; overflow: hidden; }
.grid { width: 1345px; flex: none; display: flex; flex-direction: column; }
.colheads { height: 19px; flex: none; display: flex; border-bottom: 1px solid #9f9f9f; background: #e6e6e6; }
.corner { width: 29px; flex: none; display: flex; justify-content: flex-end; padding: 4px 3px 0 0; }
.tri { width: 0; height: 0; border-style: solid; border-width: 0 0 11px 11px; border-color: transparent transparent #b4b4b4 transparent; }
.ch {
  width: 72px; flex: none; display: flex; justify-content: center; align-items: center;
  font-family: "Liberation Sans", sans-serif; font-size: 14px; color: #333;
  border-right: 1px solid #b4b4b4; padding-top: 1px;
}
.ch.cur { width: 215px; background: #d3f0e0; color: #217346; }
.ch.last { flex: 1; width: auto; border-right: 0; }
.gridbody { flex: 1; min-height: 0; display: flex; overflow: hidden; border-right: 1px solid #a9a9a9; border-bottom: 1px solid #a0a0a0; }
.rowheads { width: 28px; flex: none; background: #c6c6c6; }
.rh {
  height: 31px; border-bottom: 1px solid #a6a6a6; color: #217346;
  font-family: "Liberation Sans", sans-serif; font-size: 14.500px;
  display: flex; align-items: flex-end; justify-content: center; padding-bottom: 0; line-height: 19px;
}
.col-a {
  position: relative; width: 217px; flex: none; margin-top: -2px; background: #fff;
  border: 2px solid #217346; border-bottom: 0; z-index: 1;
}
.cell {
  height: 31px; background: #c6c6c6; border-bottom: 1px solid #a9a9a9; margin-right: 1px;
  font-family: "Liberation Sans", "Noto Sans CJK SC", sans-serif; color: #222;
  display: flex; align-items: center; white-space: nowrap;
}
.cell.head { background: #fff; justify-content: center; font: 23px "Noto Sans CJK SC", sans-serif; color: #111; border-bottom-color: #c6c6c6; }
.cell.num { justify-content: flex-end; font-size: 22.500px; padding: 2px 11px 0 0; font-weight: 400; }
.cell.txt { font: 23px "Noto Sans CJK SC", sans-serif; padding-left: 4px; color: #222; }
.handle { position: absolute; right: -2px; top: -2px; width: 6px; height: 6px; background: #217346; border: 1px solid #217346; box-shadow: -1px 1px 0 #fff; }
.rest {
  flex: 1; background-color: #fff;
  background-image:
    linear-gradient(to right, transparent 71px, #d4d4d4 71px),
    linear-gradient(to bottom, transparent 30px, #d4d4d4 30px);
  background-size: 72px 31px;
  background-position: -1px 0;
}
.vscroll { flex: 1; display: flex; flex-direction: column; padding: 3px 3px 0 3px; }
.sbtn { height: 14px; flex: none; background: #fff; border: 1px solid #c0c0c0; display: flex; align-items: center; justify-content: center; }
.sbtn.down { height: 14px; }
.up { width: 0; height: 0; border-left: 4px solid transparent; border-right: 4px solid transparent; border-bottom: 4px solid #666; }
.dn { width: 0; height: 0; border-left: 4px solid transparent; border-right: 4px solid transparent; border-top: 4px solid #666; }
.vthumb { flex: 1; background: linear-gradient(#fff 0, #fff 304px, #dadada 304px); margin-top: 1px; border-left: 1px solid #c6c6c6; border-right: 1px solid #c6c6c6; }

/* tab bar */
.tabbar { height: 28px; flex: none; background: #e6e6e6; display: flex; align-items: flex-start; border-bottom: 1px solid #c6c6c6; }
.nav-l { margin: 8px 0 0 27px; }
.nav-r { margin: 8px 0 0 22px; }
.sheet-tab {
  width: 70px; height: 25px; margin-left: 40px; background: #fff; color: #217346; font-size: 13px;
  border: 1px solid #ababab; border-top: 0; border-bottom: 2px solid #217346;
  display: flex; align-items: center; justify-content: center;
}
.grip2 { margin: 8px 0 0 649px; }
.hscroll { display: flex; margin: 7px 0 0 14px; height: 14px; width: 508px; }
.hbtn { width: 13px; flex: none; background: #fff; border: 1px solid #ababab; display: flex; align-items: center; justify-content: center; }
.lf { width: 0; height: 0; border-top: 4px solid transparent; border-bottom: 4px solid transparent; border-right: 4px solid #666; }
.rt { width: 0; height: 0; border-top: 4px solid transparent; border-bottom: 4px solid transparent; border-left: 4px solid #666; }
.hthumb { width: 450px; margin-left: 2px; background: #fff; border-right: 1px solid #c6c6c6; border-top: 1px solid #d0d0d0; border-bottom: 1px solid #d0d0d0; }
.htrack { flex: 1; background: #d6d6d6; }

/* status */
.status { height: 22px; flex: none; background: #f3f3f3; display: flex; align-items: center; white-space: nowrap; }
.ready { margin-left: 8px; }
.macro { margin-left: 20px; }
.stat { flex: none; }
.s1 { margin-left: 751px; }
.s2 { margin-left: 16px; }
.s3 { margin-left: 17px; }
.view { flex: none; display: flex; justify-content: center; align-items: center; height: 22px; }
.view.on { width: 40px; margin-left: 19px; background: #c6c6c6; }
.v2 { width: 14px; margin-left: 13px; }
.v3 { width: 14px; margin-left: 26px; }
.zoomsym { font-size: 14px; width: 9px; text-align: center; color: #555; line-height: 14px; }
.z1 { margin-left: 19px; }
.slider { width: 100px; margin-left: 4px; height: 1px; background: #999; position: relative; flex: none; }
.knob { position: absolute; left: 48px; top: -6px; width: 5px; height: 12px; background: #666; }
.z2 { margin-left: 4px; }
.pct100 { margin-left: 14px; }

/* desktop strip */
.desktop { flex: 1; min-height: 0; display: flex; overflow: hidden; }
.d-left { width: 342px; background: linear-gradient(90deg, #18363f, #24505a 18%, #1b3b45 40%, #2d5b62 62%, #1d3f49 82%, #274d55); }
.d-mid { width: 49px; background: #5d7f80; }
.d-right { flex: 1; background: #1c3848; padding-left: 860px; }
.clock { display: block; color: #fff; font-size: 11px; line-height: 13px; margin-top: 3px; }

/* mini toolbar */
.mini {
  position: absolute; left: 195px; top: 321px; width: 269px; height: 54px; background: #fff;
  border: 1px solid #d4d4d4; box-shadow: 1px 2px 4px rgba(0,0,0,.25); padding: 3px 2px 0 2px; z-index: 3;
}
.mini-row { display: flex; align-items: center; }
.m-top { height: 22px; }
.m-bot { height: 24px; margin-top: 1px; }
.mw67 { width: 67px; }
.mw49 { width: 50px; margin-left: 2px; padding-left: 3px; }
.pressed2 { flex: none; display: flex; justify-content: center; align-items: center; width: 22px; height: 24px; background: #c6c6c6; }

/* context menu */
.menu {
  position: absolute; left: 195px; top: 391px; width: 164px; height: 311px; background: #fff;
  border: 1px solid #cfcfcf; box-shadow: 1px 2px 4px rgba(0,0,0,.25); padding-top: 1px; z-index: 3; color: #666;
}
.mi { height: 25px; display: flex; align-items: center; padding-left: 32px; position: relative; white-space: nowrap; }
.mi .mico { position: absolute; left: 5px; top: 5px; }
.mi u { text-decoration: underline; }
.mhead { height: 24px; background: linear-gradient(to right, #fff 24px, #e9e9e9 24px); }
.mhead b { font-weight: 700; color: #666; }
.mhead .head-ico { top: 4px; }
.mpaste { height: 30px; padding: 3px 0 0 31px; }
.mi.short { height: 24px; }
.msep { height: 1px; margin: 1px 0 1px 32px; background: #e2e2e2; }
.msep.tight { margin-top: 0; margin-bottom: 1px; }
.mi.sel { background: #c0c0c0; color: #333; }
.mi.sel .mico { top: 4px; left: 6px; }

.redbox { position: absolute; left: 177px; top: 595px; width: 192px; height: 38px; border: 1px solid #f03a3a; z-index: 4; }

/* watermark */
.watermark { position: absolute; left: 1049px; top: 590px; width: 250px; height: 116px; z-index: 5; pointer-events: none; }
.watermark span { position: absolute; white-space: nowrap; color: rgba(255,255,255,.85); -webkit-text-stroke: 1px rgba(170,170,170,.45); font-family: "Liberation Sans", sans-serif; }
.paw { position: absolute; left: 62px; top: 0; }
.wm-bai { left: 0; top: 26px; font-size: 54px; line-height: 62px; font-weight: bold; }
.wm-du { left: 103px; top: 43px; font-size: 30px; line-height: 36px; }
.watermark .wm-cn { left: 158px; top: 32px; font: 40px/50px "Noto Sans CJK SC", sans-serif; font-weight: 700; }
.wm-url { left: 2px; top: 84px; font-size: 28px; line-height: 34px; }
```
